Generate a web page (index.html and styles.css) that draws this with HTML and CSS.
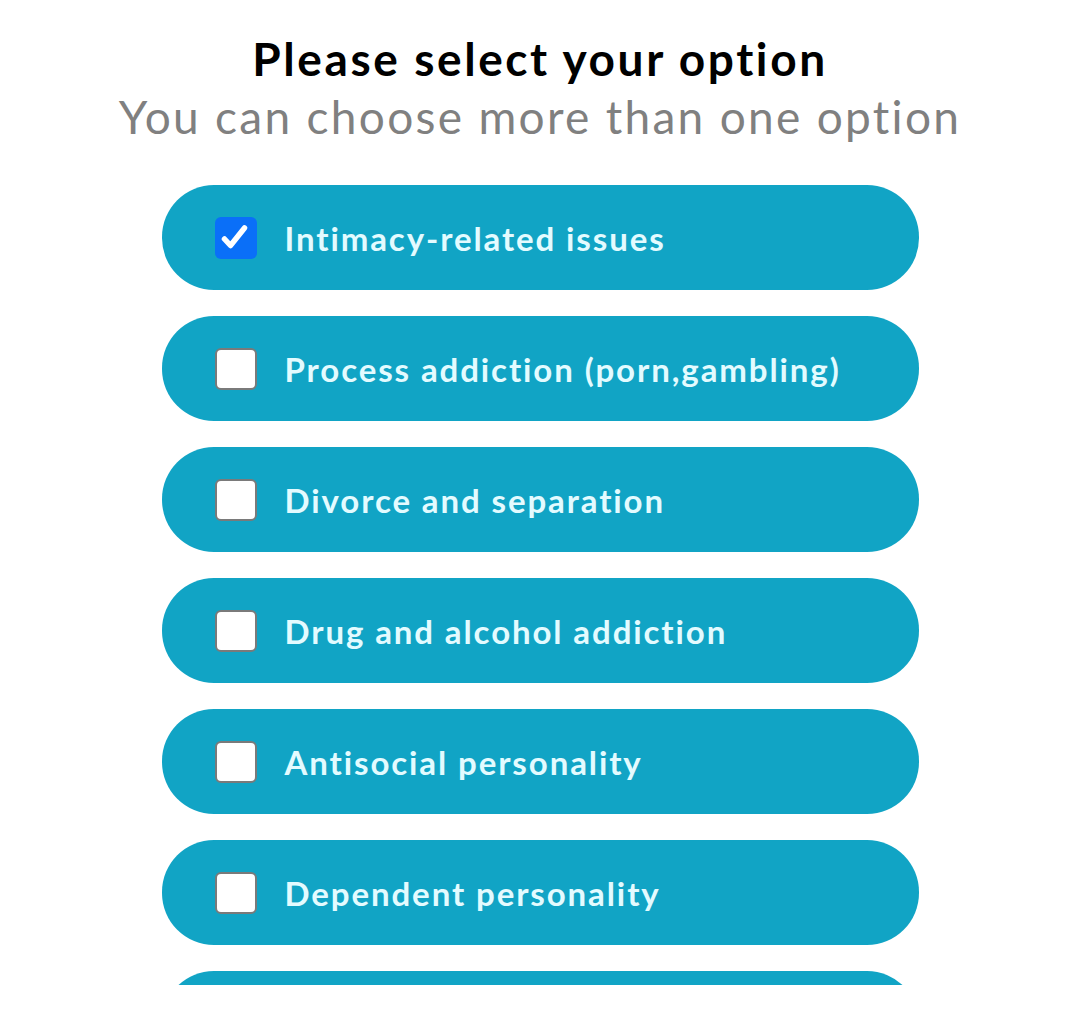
FILE: index.html
```html
<!DOCTYPE html>
<html>
<head>
<meta charset="utf-8">
<link rel="stylesheet" href="styles.css">
</head>
<body>
<div class="screen">
  <header class="head">
    <h1 class="title">Please select your option</h1>
    <p class="subtitle">You can choose more than one option</p>
  </header>
  <div class="list">
    <label class="option">
      <span class="box checked">
        <svg viewBox="0 0 41 41" width="41" height="41"><path d="M9.5 22 L15.5 28.5 L29.5 11" fill="none" stroke="#fff" stroke-width="5.5" stroke-linecap="round" stroke-linejoin="round"/></svg>
      </span>
      <span class="text">Intimacy-related issues</span>
    </label>
    <label class="option"><span class="box"></span><span class="text">Process addiction (porn,gambling)</span></label>
    <label class="option"><span class="box"></span><span class="text">Divorce and separation</span></label>
    <label class="option"><span class="box"></span><span class="text">Drug and alcohol addiction</span></label>
    <label class="option"><span class="box"></span><span class="text">Antisocial personality</span></label>
    <label class="option"><span class="box"></span><span class="text">Dependent personality</span></label>
    <div class="option"></div>
  </div>
</div>
</body>
</html>
```

FILE: styles.css
```css
html, body {
  margin: 0;
  padding: 0;
  background: #ffffff;
}
.screen {
  width: 1080px;
  height: 1027px;
  font-family: "Lato", "Open Sans", sans-serif;
}
.head {
  text-align: center;
  padding-top: 30px;
}
.title {
  margin: 0;
  font-size: 46px;
  line-height: 58px;
  font-weight: 700;
  color: #000;
  letter-spacing: 2.6px;
}
.subtitle {
  margin: 0;
  font-size: 46px;
  line-height: 58px;
  font-weight: 400;
  color: #808080;
  letter-spacing: 2.3px;
}
.list {
  margin: 39px auto 0;
  width: 757px;
  height: 800px;
  overflow: hidden;
  display: flex;
  flex-direction: column;
  gap: 26px;
}
.option {
  flex: 0 0 105px;
  height: 105px;
  border-radius: 52px;
  background: #11a4c5;
  display: flex;
  align-items: center;
  padding-left: 53px;
  gap: 28px;
  box-sizing: border-box;
}
.box {
  width: 42px;
  height: 42px;
  box-sizing: border-box;
  border-radius: 6px;
  background: #fff;
  border: 2.5px solid #7a7a7a;
  display: flex;
  align-items: center;
  justify-content: center;
  flex: none;
}
.box.checked {
  background: #0a6ff8;
  border: none;
}
.text {
  color: #e3fbff;
  font-size: 33px;
  font-weight: 700;
  letter-spacing: 1.9px;
}
```
